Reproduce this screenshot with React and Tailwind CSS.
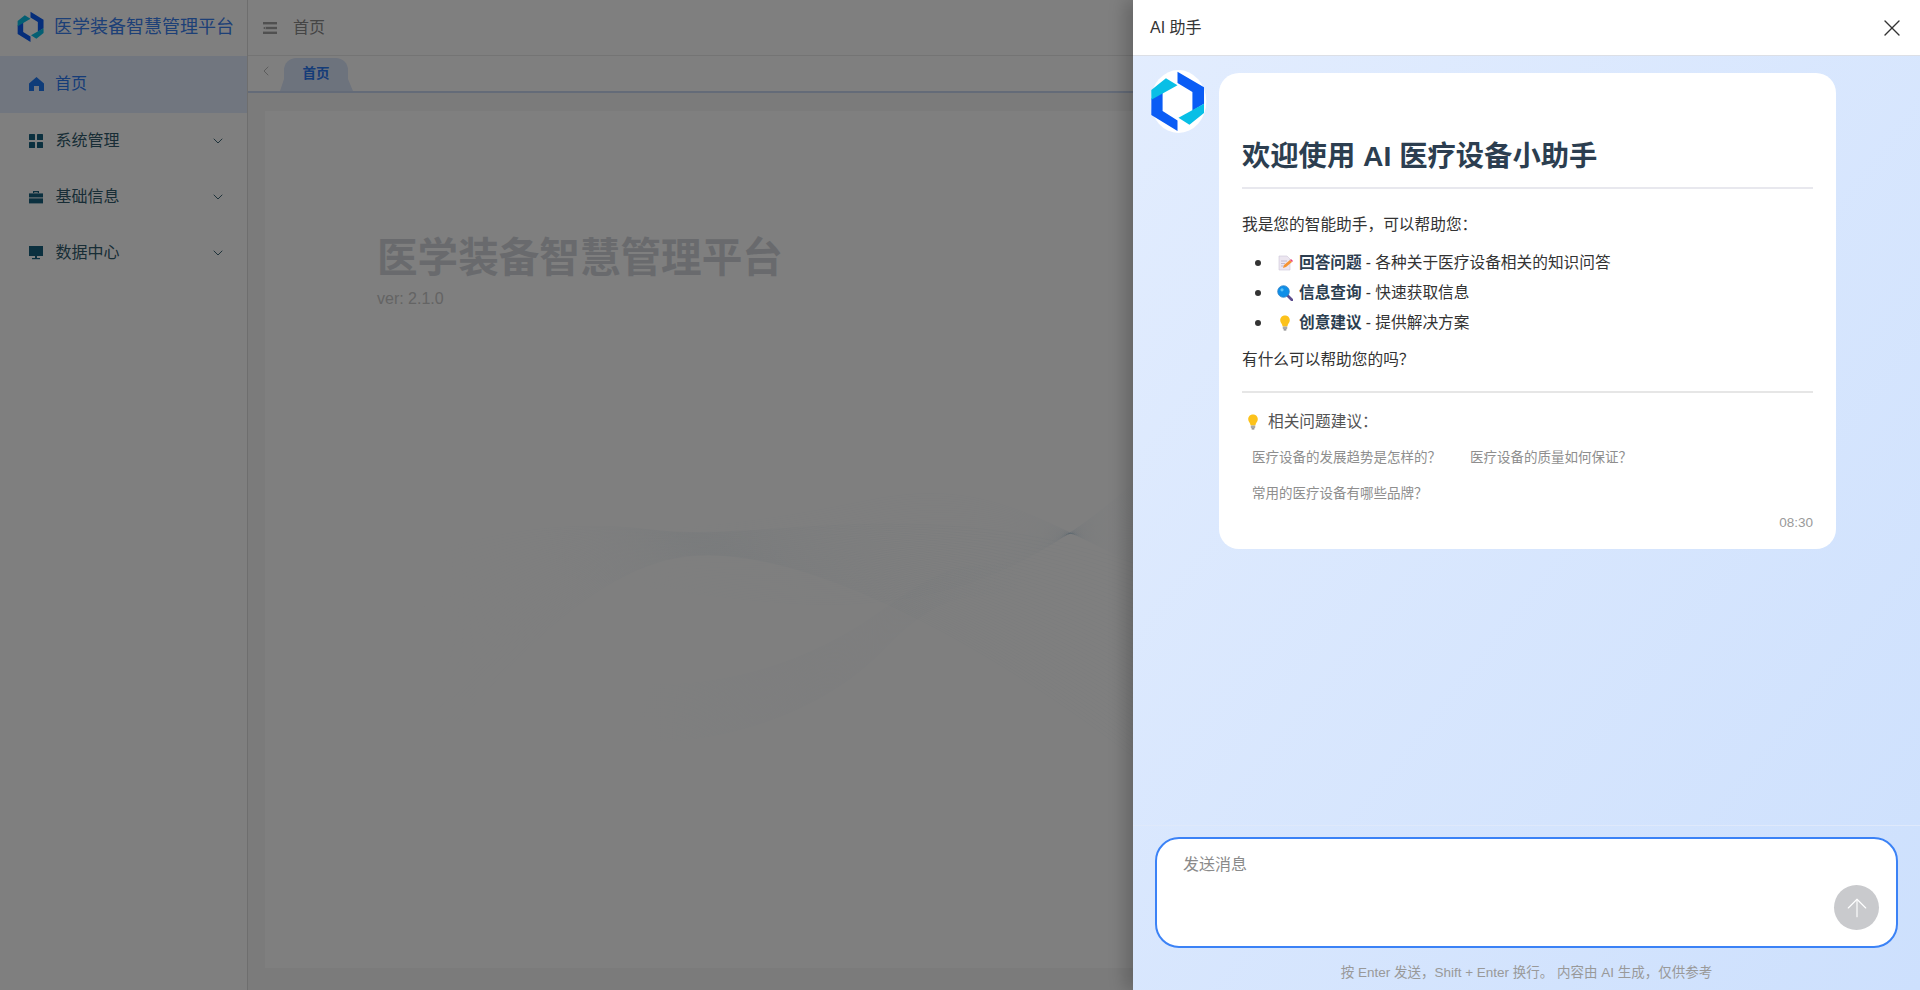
import { ChevronDown, ChevronLeft, ArrowUp, X } from 'lucide-react'

const FONT = 'font-["Liberation_Sans","Noto_Sans_CJK_SC",sans-serif]'

const menus = [
  { name: '系统管理', icon: 'grid' },
  { name: '基础信息', icon: 'case' },
  { name: '数据中心', icon: 'screen' },
]

function Logo({ plate, className }) {
  return (
    <svg viewBox="89 210 172 190" preserveAspectRatio="none" className={className}>
      {plate && <ellipse cx="175" cy="305" rx="84" ry="95" fill="#fff" />}
      <path d="M172 215 L252 262 L252 312 L217 333 L217 276 L172 249 Z" fill="#0a5cf5" />
      <path d="M172 394 L93 346 L93 296 L127 276 L127 334 L172 362 Z" fill="#0a5cf5" />
      <path d="M93 270 L137 235 L172 256 L93 300 Z" fill="#08bfe6" />
      <path d="M252 312 L252 340 L208 375 L175 354 Z" fill="#08bfe6" />
    </svg>
  )
}

function MenuIcon({ type }) {
  if (type === 'grid') {
    return (
      <svg viewBox="0 0 14 14" className="h-[14px] w-[14px]" fill="#16607f">
        <rect width="6" height="6" rx="0.5" />
        <rect x="8" width="6" height="6" rx="0.5" />
        <rect y="8" width="6" height="6" rx="0.5" />
        <rect x="8" y="8" width="6" height="6" rx="0.5" />
      </svg>
    )
  }
  if (type === 'case') {
    return (
      <svg viewBox="0 0 14 14" className="h-[14px] w-[14px]" fill="#16607f">
        <path d="M4 3 V1 H10 V3 H8.8 V2.2 H5.2 V3 Z" />
        <path d="M0 3.4 H14 V7.4 H0 Z" />
        <path d="M0 8.4 H14 V13.4 H0 Z" />
      </svg>
    )
  }
  return (
    <svg viewBox="0 0 14 14" className="h-[14px] w-[14px]" fill="#16607f">
      <rect width="14" height="10" />
      <rect x="6" y="10" width="2" height="2" />
      <rect x="3" y="12" width="8" height="1.2" />
    </svg>
  )
}

// thin lines behind the welcome text, blended between two edge curves
function Wave() {
  const mix = (a, b, t) => a.map((v, i) => v + (b[i] - v) * t)
  const toPath = (p) => `M${p[0]} ${p[1]} C${p[2]} ${p[3]} ${p[4]} ${p[5]} ${p[6]} ${p[7]} S${p[8]} ${p[9]} ${p[10]} ${p[11]}`
  const families = [
    // from the lower left up to the middle, then fanning out on the right
    { grad: 'fadeA', a: [71, 482, 170, 430, 280, 405, 387, 419, 660, 380, 868, 452], b: [71, 769, 190, 620, 290, 480, 400, 450, 700, 520, 868, 650] },
    // the band that dips and rises to the right edge
    { grad: 'fadeB', a: [243, 411, 390, 430, 500, 410, 605, 389, 760, 400, 868, 452], b: [300, 467, 470, 490, 540, 500, 605, 494, 760, 470, 868, 371] },
    // bowl under the middle
    { grad: 'fadeC', a: [300, 560, 400, 590, 520, 570, 616, 500, 700, 470, 790, 440], b: [300, 623, 400, 650, 540, 620, 616, 542, 700, 500, 790, 470] },
  ]
  const n = 44
  return (
    <svg className="absolute left-0 top-0 h-[860px] w-[880px]" viewBox="0 0 880 860" fill="none">
      <defs>
        <linearGradient id="fadeA" gradientUnits="userSpaceOnUse" x1="71" y1="0" x2="420" y2="0">
          <stop offset="0" stopColor="#9dbbd0" stopOpacity="0" />
          <stop offset="1" stopColor="#9dbbd0" stopOpacity="0.09" />
        </linearGradient>
        <linearGradient id="fadeB" gradientUnits="userSpaceOnUse" x1="243" y1="0" x2="600" y2="0">
          <stop offset="0" stopColor="#9dbbd0" stopOpacity="0" />
          <stop offset="1" stopColor="#9dbbd0" stopOpacity="0.06" />
        </linearGradient>
        <linearGradient id="fadeC" gradientUnits="userSpaceOnUse" x1="300" y1="0" x2="790" y2="0">
          <stop offset="0" stopColor="#9dbbd0" stopOpacity="0" />
          <stop offset="0.5" stopColor="#9dbbd0" stopOpacity="0.07" />
          <stop offset="1" stopColor="#9dbbd0" stopOpacity="0" />
        </linearGradient>
      </defs>
      {families.map((f) =>
        Array.from({ length: n }, (_, i) => (
          <path key={`${f.grad}-${i}`} d={toPath(mix(f.a, f.b, i / n))} stroke={`url(#${f.grad})`} strokeWidth="0.6" />
        )),
      )}
    </svg>
  )
}

function MemoIcon() {
  return (
    <svg viewBox="0 0 16 16" className="h-4 w-4 shrink-0">
      <path d="M2 1 H10 L13 4 V15 H2 Z" fill="#ece6f0" stroke="#cfc6d8" strokeWidth="0.6" />
      <path d="M4 6 H10 M4 8.5 H8 M4 11 H7" stroke="#b7aec4" strokeWidth="0.8" />
      <path d="M6 13 L7 10 L13 5 L15 7 L9 12 Z" fill="#f59331" />
      <path d="M13 5 L14 4 L16 6 L15 7 Z" fill="#ee3f7a" />
    </svg>
  )
}

function SearchIcon() {
  return (
    <svg viewBox="0 0 16 16" className="h-4 w-4 shrink-0">
      <path d="M10 10 L15 15" stroke="#5c4d8f" strokeWidth="2.6" strokeLinecap="round" />
      <circle cx="6.5" cy="6.5" r="5.8" fill="#0f8fe8" stroke="#2f7fc4" strokeWidth="0.8" />
      <circle cx="5" cy="4.8" r="1.6" fill="#5cc2f7" />
    </svg>
  )
}

function BulbIcon() {
  return (
    <svg viewBox="0 0 16 16" className="h-4 w-4 shrink-0">
      <path d="M8 0.5 C4.8 0.5 3.2 2.8 3.2 5.2 C3.2 7.6 5.4 9 5.6 11.4 H10.4 C10.6 9 12.8 7.6 12.8 5.2 C12.8 2.8 11.2 0.5 8 0.5 Z" fill="#fcc21b" />
      <rect x="5.8" y="11.6" width="4.4" height="2.6" rx="0.6" fill="#a9a9a9" />
      <rect x="6.6" y="14.2" width="2.8" height="1.3" rx="0.6" fill="#7e7e7e" />
    </svg>
  )
}

function Sidebar() {
  return (
    <aside className="flex w-[248px] shrink-0 flex-col border-r border-[#dcdcdc] bg-white">
      <div className="flex h-[56px] items-center pb-[2px] pl-[17px]">
        <Logo className="h-[32px] w-[28px]" />
        <span className="ml-[9px] text-[18px] text-[#3a80ee]">医学装备智慧管理平台</span>
      </div>
      <div className="flex h-[57px] items-center bg-[#e2ecff] pb-[1px] pl-[29px] text-[16px] text-[#2a78f0]">
        <svg viewBox="0 0 15 14" className="h-[14px] w-[15px]" fill="#1f78f2">
          <path d="M7.5 0 L15 6.4 V14 H10 V9 H5 V14 H0 V6.4 Z" />
        </svg>
        <span className="ml-[11px]">首页</span>
      </div>
      {menus.map((m) => (
        <div key={m.name} className="flex h-[56px] items-center pl-[29px] pr-[21px] text-[16px] text-[#305a6c]">
          <MenuIcon type={m.icon} />
          <span className="ml-[12.5px] flex-1">{m.name}</span>
          <ChevronDown size={16} strokeWidth={1.4} />
        </div>
      ))}
    </aside>
  )
}

function MainArea() {
  return (
    <div className="flex min-w-0 flex-1 flex-col bg-[#f6f6f6]">
      <div className="flex h-[56px] shrink-0 items-center border-b border-[#e8e8e8] bg-white pl-[15px]">
        <svg viewBox="0 0 14 12" className="h-[12px] w-[14px]" fill="#a0a0a0">
          <rect width="14" height="2.4" />
          <rect x="3" y="4.8" width="11" height="2.4" />
          <path d="M0 6 L2.4 4.6 V7.4 Z" />
          <rect y="9.6" width="14" height="2.4" />
        </svg>
        <span className="ml-[16px] text-[16px] text-[#8a8a8a]">首页</span>
      </div>
      <div className="flex h-[37px] shrink-0 items-end border-b-2 border-[#c8d7f0] bg-white">
        <ChevronLeft size={16} strokeWidth={1} className="mb-[12px] ml-[10px] text-[#999]" />
        <div className="ml-[6px] h-0 w-0 border-b-[12px] border-l-[4px] border-b-[#dbe6fb] border-l-transparent" />
        <div className="flex h-[33px] w-[64px] items-center justify-center rounded-t-[12px] bg-[#dbe6fb] pb-[1px] text-[13.5px] font-bold text-[#2a78f0]">
          首页
        </div>
        <div className="h-0 w-0 border-b-[12px] border-r-[5px] border-b-[#dbe6fb] border-r-transparent" />
      </div>
      <div className="flex-1 overflow-hidden pb-[22px] pl-[17px] pr-[17px] pt-[18px]">
        <div className="relative h-full bg-white pl-[112px] pt-[122px]">
          <Wave />
          <h1 className="text-[40.6px] font-bold leading-[50px] text-[#d2d5da]">医学装备智慧管理平台</h1>
          <p className="mt-[6px] text-[16px] leading-[20px] text-[#c8c8c8]">ver: 2.1.0</p>
        </div>
      </div>
    </div>
  )
}

function Feature({ icon, title, text }) {
  return (
    <li className="flex h-[30px] items-center">
      <span className="mr-[16px] h-[6px] w-[6px] rounded-full bg-[#333]" />
      <span className="flex w-[22px]">{icon}</span>
      <b className="font-bold text-[#2c3e50]">{title}</b>
      <span className="ml-[4px]">- {text}</span>
    </li>
  )
}

function Drawer() {
  return (
    <div className="absolute right-0 top-0 flex h-full w-[787px] flex-col bg-gradient-to-br from-[#e3edfe] to-[#cde0fd] shadow-[-8px_0_16px_rgba(0,0,0,0.2)]">
      <div className="flex h-[56px] shrink-0 items-center justify-between border-b border-[#dcdfe6] bg-white pl-[17px] pr-[14px]">
        <span className="text-[16px] text-[#333]">AI 助手</span>
        <X size={28} strokeWidth={1.2} className="text-[#333]" />
      </div>
      <div className="flex flex-1 items-start pl-[17px] pt-[14px]">
        <Logo plate className="h-[63px] w-[57px] shrink-0" />
        <div className="relative ml-[12px] mt-[3px] h-[476px] w-[617px] rounded-[20px] bg-white px-[23px] text-[15.7px] text-[#333]">
          <h2 className="mt-[60px] h-[56px] border-b-2 border-[#e8e8ee] text-[28.3px] font-bold leading-[46px] text-[#2c3e50]">
            欢迎使用 AI 医疗设备小助手
          </h2>
          <p className="mt-[24px] leading-[24px]">我是您的智能助手，可以帮助您：</p>
          <ul className="mt-[11px] pl-[13px]">
            <Feature icon={<MemoIcon />} title="回答问题" text="各种关于医疗设备相关的知识问答" />
            <Feature icon={<SearchIcon />} title="信息查询" text="快速获取信息" />
            <Feature icon={<BulbIcon />} title="创意建议" text="提供解决方案" />
          </ul>
          <p className="mt-[10px] leading-[24px]">有什么可以帮助您的吗？</p>
          <div className="mt-[19px] border-t-2 border-[#e6e6e6]" />
          <div className="ml-[3px] mt-[19px] flex h-[20px] items-center text-[#555]">
            <BulbIcon />
            <span className="ml-[7px]">相关问题建议：</span>
          </div>
          <div className="ml-[10px] mt-[18px] flex h-[16px] items-center text-[13.5px] text-[#8e8e8e]">
            <span className="w-[218px]">医疗设备的发展趋势是怎样的？</span>
            <span>医疗设备的质量如何保证？</span>
          </div>
          <div className="ml-[10px] mt-[20px] h-[16px] text-[13.5px] leading-[16px] text-[#8e8e8e]">常用的医疗设备有哪些品牌？</div>
          <div className="mt-[13px] text-right text-[13.5px] leading-[16px] text-[#9a9a9a]">08:30</div>
        </div>
      </div>
      <div className="shrink-0 border-t border-[#dfe9fb] px-[22px] pt-[11px]">
        <div className="relative h-[111px] rounded-[24px] border-2 border-[#3b82f6] bg-white pl-[26px] pt-[14px] text-[16px] leading-[24px] text-[#8a8a8a]">
          发送消息
          <div className="absolute bottom-[16px] right-[17px] flex h-[45px] w-[45px] items-center justify-center rounded-full bg-[#c9cacd]">
            <ArrowUp size={30} strokeWidth={0.9} className="text-white" />
          </div>
        </div>
        <p className="mb-[8px] mt-[16px] text-center text-[13.5px] leading-[18px] text-[#999]">
          按 Enter 发送，Shift + Enter 换行。 内容由 AI 生成，仅供参考
        </p>
      </div>
    </div>
  )
}

export default function App() {
  return (
    <div className={`relative flex h-screen w-full overflow-hidden ${FONT}`}>
      <Sidebar />
      <MainArea />
      <div className="absolute inset-0 bg-black/50" />
      <Drawer />
    </div>
  )
}
